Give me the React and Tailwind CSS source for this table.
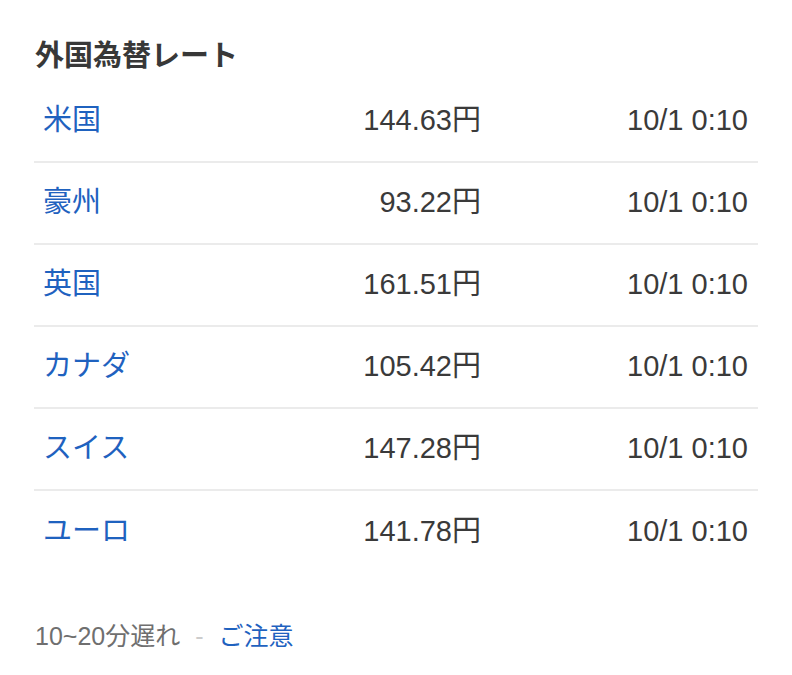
import React from "react";

const rows = [
  ["米国", "144.63円"],
  ["豪州", "93.22円"],
  ["英国", "161.51円"],
  ["カナダ", "105.42円"],
  ["スイス", "147.28円"],
  ["ユーロ", "141.78円"],
];

export default function App() {
  return (
    <div
      className="w-[792px] h-[675px] bg-white px-[34px] pt-[38px]"
      style={{ fontFamily: '"Liberation Sans", "Noto Sans CJK JP", sans-serif' }}
    >
      <h2 className="pl-[1px] text-[29px] leading-[36px] font-bold text-[#383838] mb-[7px]">
        外国為替レート
      </h2>
      <div>
        {rows.map(([name, val], i) => (
          <div
            key={name}
            className={
              "flex items-center h-[82px] pl-[9px] pr-[10px] " +
              (i < rows.length - 1 ? "border-b-2 border-[#ebebeb]" : "")
            }
          >
            <a className="flex-1 text-[29px] text-[#1f62bf]">{name}</a>
            <span className="w-[180px] text-right text-[29px] text-[#3a3a3a]">{val}</span>
            <span className="w-[267px] text-right text-[29px] text-[#3a3a3a]">10/1 0:10</span>
          </div>
        ))}
      </div>
      <div className="mt-[48px] pl-[1px] text-[25px] leading-[30px] flex items-center">
        <span className="text-[#6f6f6f]">10~20分遅れ</span>
        <span className="text-[#cccccc] mx-[15px]">-</span>
        <a className="text-[#1f62bf]">ご注意</a>
      </div>
    </div>
  );
}
